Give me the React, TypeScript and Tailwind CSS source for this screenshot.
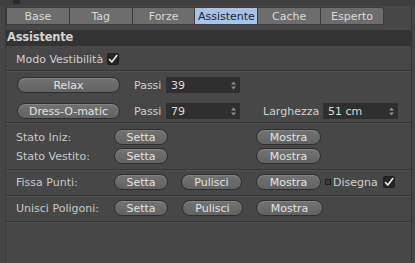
import React from "react";

const Btn = ({ label, w }: { label: string; w: string }) => (
  <div
    className={`${w} h-[16px] shrink-0 rounded-full border border-[#2e2e2e] bg-[linear-gradient(#737373,#626262)] flex items-center justify-center text-[11px] text-[#e2e2e2] leading-none shadow-[inset_0_1px_0_rgba(255,255,255,0.12)]`}
  >
    {label}
  </div>
);

const Spin = () => (
  <svg width="5" height="9" viewBox="0 0 5 9" className="shrink-0">
    <path d="M0 3.5 L2.5 0.5 L5 3.5 Z" fill="#8c8c8c" />
    <path d="M0 5.5 L2.5 8.5 L5 5.5 Z" fill="#8c8c8c" />
  </svg>
);

const Input = ({ value, w }: { value: string; w: string }) => (
  <div className={`${w} h-[16px] shrink-0 bg-[#2f2f2f] flex items-center justify-between pl-[5px] pr-[4px] text-[11px] text-[#dcdcdc] leading-none`}>
    <span>{value}</span>
    <Spin />
  </div>
);

const Check = () => (
  <div className="w-[12px] h-[12px] rounded-[2px] bg-[#262626] border border-[#1e1e1e] flex items-center justify-center">
    <svg width="10" height="10" viewBox="0 0 10 10">
      <path d="M1.5 5.5 L3.8 8 L8.8 1.5" stroke="#f0f0f0" strokeWidth="1.6" fill="none" strokeLinecap="round" strokeLinejoin="round" />
    </svg>
  </div>
);

const Sep = ({ mt }: { mt: string }) => (
  <div className={`${mt} shrink-0`}>
    <div className="h-px bg-[#363636]" />
    <div className="h-px bg-[#505050]" />
  </div>
);

const Label = ({ children }: { children: React.ReactNode }) => (
  <div className="w-[98px] shrink-0 text-[11px] text-[#c9c9c9] leading-none">{children}</div>
);

const Text = ({ children, cls }: { children: React.ReactNode; cls: string }) => (
  <span className={`${cls} shrink-0 text-[11px] text-[#cfcfcf] leading-none`}>{children}</span>
);

const tabs = ["Base", "Tag", "Forze", "Assistente", "Cache", "Esperto"];

export default function App() {
  return (
    <div
      className="w-[415px] h-[263px] bg-[#474747] overflow-hidden flex flex-col"
      style={{ fontFamily: '"DejaVu Sans", "Liberation Sans", sans-serif' }}
    >
      <div className="h-[6px] bg-[#3e3e3e] flex shrink-0">
        <div className="ml-[13px] w-[7px] h-[4px] bg-[#2a2a2a]" />
      </div>
      <div className="flex flex-1">
        <div className="w-[6px] bg-[#454545] border-r border-[#3a3a3a] shrink-0" />
        <div className="flex-1 flex flex-col">
          <div className="flex h-[18px] mt-[1px] w-[378px] shrink-0">
            {tabs.map((t) => (
              <div
                key={t}
                className={`flex-1 flex items-center justify-center text-[11px] leading-none border border-[#3b3b3b] -ml-px first:ml-0 last:rounded-tr-[3px] ${
                  t === "Assistente" ? "bg-[#a6c4e8] text-[#1c2430]" : "bg-[#6d6d6d] text-[#dadada]"
                }`}
              >
                {t}
              </div>
            ))}
          </div>
          <div className="mt-[5px] h-[16px] shrink-0 bg-[#333333] flex items-center pl-[1px] text-[11.5px] font-bold text-[#d4d4d4] leading-none tracking-[-0.2px]">
            Assistente
          </div>
          <div className="h-[24px] shrink-0 flex items-center pt-[2px] pl-[10px] gap-[4px] text-[11px] text-[#cfcfcf] leading-none">
            <span>Modo Vestibilità</span>
            <Check />
          </div>
          <Sep mt="mt-0" />
          <div className="mt-[5px] h-[16px] shrink-0 flex items-center pl-[11px]">
            <Btn label="Relax" w="w-[103px]" />
            <Text cls="ml-[14px] w-[32px]">Passi</Text>
            <Input value="39" w="w-[74px]" />
          </div>
          <div className="mt-[10px] h-[16px] shrink-0 flex items-center pl-[11px]">
            <Btn label="Dress-O-matic" w="w-[103px]" />
            <Text cls="ml-[14px] w-[32px]">Passi</Text>
            <Input value="79" w="w-[74px]" />
            <Text cls="ml-[23px] w-[60px]">Larghezza</Text>
            <Input value="51 cm" w="w-[75px]" />
          </div>
          <Sep mt="mt-[3px]" />
          <div className="mt-[5px] h-[16px] shrink-0 flex items-center pl-[10px]">
            <Label>Stato Iniz:</Label>
            <Btn label="Setta" w="w-[54px]" />
            <div className="w-[88px] shrink-0" />
            <Btn label="Mostra" w="w-[65px]" />
          </div>
          <div className="mt-[3px] h-[16px] shrink-0 flex items-center pl-[10px]">
            <Label>Stato Vestito:</Label>
            <Btn label="Setta" w="w-[54px]" />
            <div className="w-[88px] shrink-0" />
            <Btn label="Mostra" w="w-[65px]" />
          </div>
          <Sep mt="mt-[5px]" />
          <div className="mt-[3px] h-[16px] shrink-0 flex items-center pl-[10px]">
            <Label>Fissa Punti:</Label>
            <Btn label="Setta" w="w-[54px]" />
            <div className="w-[13px] shrink-0" />
            <Btn label="Pulisci" w="w-[61px]" />
            <div className="w-[14px] shrink-0" />
            <Btn label="Mostra" w="w-[65px]" />
            <div className="ml-[4px] w-[6px] h-[6px] shrink-0 border border-[#1f1f1f] bg-[#3a3a3a]" />
            <Text cls="ml-[2px]">Disegna</Text>
            <div className="ml-[5px]">
              <Check />
            </div>
          </div>
          <Sep mt="mt-[5px]" />
          <div className="mt-[3px] h-[16px] shrink-0 flex items-center pl-[10px]">
            <Label>Unisci Poligoni:</Label>
            <Btn label="Setta" w="w-[54px]" />
            <div className="w-[14px] shrink-0" />
            <Btn label="Pulisci" w="w-[61px]" />
            <div className="w-[13px] shrink-0" />
            <Btn label="Mostra" w="w-[67px]" />
          </div>
          <Sep mt="mt-[5px]" />
        </div>
        <div className="w-[4px] bg-[#444] border-l border-[#353535] shrink-0" />
      </div>
    </div>
  );
}
